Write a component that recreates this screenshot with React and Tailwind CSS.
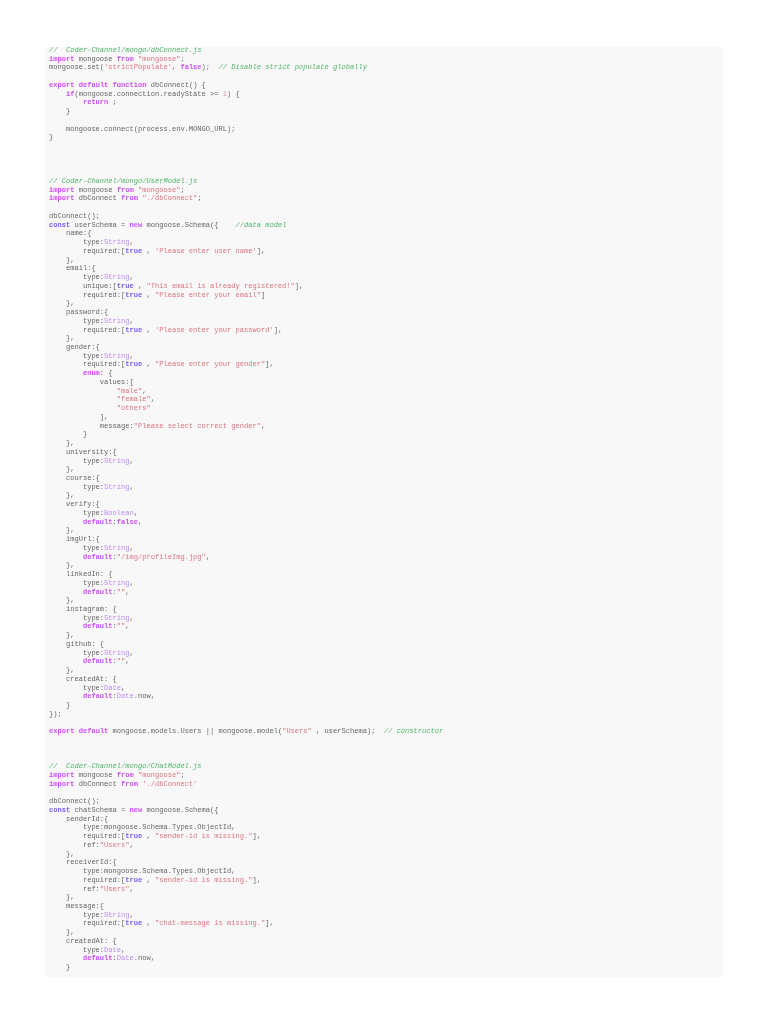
const styles = {
  k: "font-bold text-[#cf4df5]",
  b: "font-bold text-[#7a5cf5]",
  s: "text-[#dc7480]",
  c: "italic text-[#4fb56a]",
  t: "text-[#bd8af7]",
  d: "text-[#c99a9a]",
};

const code = `{c://  Coder-Channel/mongo/dbConnect.js}
{k:import} mongoose {k:from} {s:"mongoose"};
mongoose.set({s:'strictPopulate'}, {k:false});  {c:// Disable strict populate globally}

{k:export} {k:default} {k:function} dbConnect() {
    {k:if}(mongoose.connection.readyState >= {d:1}) {
        {k:return} ;
    }

    mongoose.connect(process.env.MONGO_URL);
}




{c:// Coder-Channel/mongo/UserModel.js}
{k:import} mongoose {k:from} {s:"mongoose"};
{k:import} dbConnect {k:from} {s:"./dbConnect"};

dbConnect();
{b:const} userSchema = {k:new} mongoose.Schema({    {c://data model}
    name:{
        type:{t:String},
        required:[{b:true} , {s:'Please enter user name'}],
    },
    email:{
        type:{t:String},
        unique:[{b:true} , {s:"This email is already registered!"}],
        required:[{b:true} , {s:"Please enter your email"}]
    },
    password:{
        type:{t:String},
        required:[{b:true} , {s:'Please enter your password'}],
    },
    gender:{
        type:{t:String},
        required:[{b:true} , {s:"Please enter your gender"}],
        {k:enum}: {
            values:[
                {s:"male"},
                {s:"female"},
                {s:"others"}
            ],
            message:{s:"Please select correct gender"},
        }
    },
    university:{
        type:{t:String},
    },
    course:{
        type:{t:String},
    },
    verify:{
        type:{t:Boolean},
        {k:default}:{k:false},
    },
    imgUrl:{
        type:{t:String},
        {k:default}:{s:"/img/profileImg.jpg"},
    },
    linkedIn: {
        type:{t:String},
        {k:default}:{s:""},
    },
    instagram: {
        type:{t:String},
        {k:default}:{s:""},
    },
    github: {
        type:{t:String},
        {k:default}:{s:""},
    },
    createdAt: {
        type:{t:Date},
        {k:default}:{t:Date}.now,
    }
});

{k:export} {k:default} mongoose.models.Users || mongoose.model({s:"Users"} , userSchema);  {c:// constructor}



{c://  Coder-Channel/mongo/ChatModel.js}
{k:import} mongoose {k:from} {s:"mongoose"};
{k:import} dbConnect {k:from} {s:'./dbConnect'}

dbConnect();
{b:const} chatSchema = {k:new} mongoose.Schema({
    senderId:{
        type:mongoose.Schema.Types.ObjectId,
        required:[{b:true} , {s:"sender-id is missing."}],
        ref:{s:"Users"},
    },
    receiverId:{
        type:mongoose.Schema.Types.ObjectId,
        required:[{b:true} , {s:"sender-id is missing."}],
        ref:{s:"Users"},
    },
    message:{
        type:{t:String},
        required:[{b:true} , {s:"chat-message is missing."}],
    },
    createdAt: {
        type:{t:Date},
        {k:default}:{t:Date}.now,
    }`;

function Line({ text }) {
  const parts = text.split(/(\{[kbsctd]:[^}]*\})/g);
  return (
    <div className="h-[8.745px] leading-[8.745px] whitespace-pre">
      {parts.map((p, i) => {
        const m = p.match(/^\{([kbsctd]):([^}]*)\}$/);
        return m ? (
          <span key={i} className={styles[m[1]]}>{m[2]}</span>
        ) : (
          <span key={i}>{p}</span>
        );
      })}
    </div>
  );
}

export default function App() {
  return (
    <div className="min-h-[1024px] bg-white pt-[47px] pl-[45px]">
      <div className="h-[930px] w-[678px] overflow-hidden bg-[#f8f8f8] pl-[4px]">
        <div className="-mt-px font-['Liberation_Mono','Courier_New',monospace] text-[7.07px] text-[#666666] blur-[0.3px]">
          {code.split("\n").map((l, i) => (
            <Line key={i} text={l} />
          ))}
        </div>
      </div>
    </div>
  );
}
